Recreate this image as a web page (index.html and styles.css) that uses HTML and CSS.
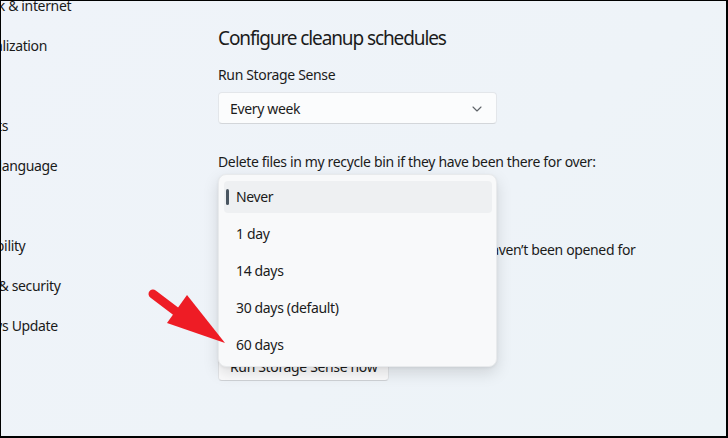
FILE: index.html
```html
<!DOCTYPE html>
<html lang="en">
<head>
<meta charset="utf-8">
<title>Storage Sense</title>
<link rel="stylesheet" href="styles.css">
</head>
<body>
<div class="frame">
  <nav class="sidebar">
    <ul class="nav-list">
      <li>Network &amp; internet</li>
      <li>Personalization</li>
      <li>Apps</li>
      <li>Accounts</li>
      <li>Time &amp; language</li>
      <li>Gaming</li>
      <li>Accessibility</li>
      <li>Privacy &amp; security</li>
      <li>Windows Update</li>
    </ul>
  </nav>
  <main class="main">
    <h2 class="heading">Configure cleanup schedules</h2>
    <div class="label">Run Storage Sense</div>
    <div class="select">
      <span>Every week</span>
      <svg class="chev" width="10" height="6" viewBox="0 0 10 6"><path d="M1 1 L5 5 L9 1" fill="none" stroke="#5f6368" stroke-width="1.1" stroke-linecap="round" stroke-linejoin="round"/></svg>
    </div>
    <div class="label label-gap">Delete files in my recycle bin if they have been there for over:</div>
    <div class="select select-hidden"><span>Never</span></div>
    <div class="label label-wrap">Delete files in my Downloads folder if they haven’t been opened for more than:</div>
    <div class="select select-hidden"><span>Never</span></div>
    <button class="btn">Run Storage Sense now</button>

    <div class="flyout">
      <div class="opt selected"><span class="accent"></span>Never</div>
      <div class="opt">1 day</div>
      <div class="opt">14 days</div>
      <div class="opt">30 days (default)</div>
      <div class="opt">60 days</div>
    </div>
  </main>
  <svg class="arrow" width="100" height="70" viewBox="0 0 100 70">
    <line x1="9" y1="10" x2="38" y2="32" stroke="#ee1c25" stroke-width="9" stroke-linecap="round"/>
    <polygon points="23,39 43,11 81,59" fill="#ee1c25"/>
  </svg>
</div>
</body>
</html>
```
FILE: styles.css
```css
* { box-sizing: border-box; }
html, body { margin: 0; padding: 0; }
body {
  width: 728px;
  height: 438px;
  overflow: hidden;
  font-family: "Noto Sans", "Open Sans", sans-serif;
  letter-spacing: -0.35px;
  color: #1b1b1b;
}
.frame {
  position: relative;
  width: 728px;
  height: 438px;
  border-style: solid;
  border-color: #000;
  border-width: 1px 2px 2px 1px;
  background: linear-gradient(135deg, #eff3f9 0%, #eef3f8 60%, #ecf3f7 100%);
  display: flex;
  overflow: hidden;
}
.sidebar {
  width: 217px;
  flex: none;
  overflow: hidden;
}
.nav-list {
  list-style: none;
  margin: -15px 0 0 -50px;
  padding: 0;
}
.nav-list li {
  height: 40px;
  line-height: 40px;
  font-size: 14px;
  white-space: nowrap;
  color: #1a1a1a;
}
.main {
  position: relative;
  flex: 1;
  padding-top: 23px;
  display: flex;
  flex-direction: column;
  align-items: flex-start;
}
.heading {
  margin: 0;
  font-size: 19px;
  line-height: 28px;
  font-weight: 400;
  letter-spacing: -1.1px;
}
.label {
  margin-top: 13px;
  font-size: 14px;
  line-height: 20px;
  white-space: nowrap;
}
.label-gap { margin-top: 28px; }
.label-wrap {
  white-space: normal;
  width: 440px;
  margin-top: 28px;
}
.select {
  margin-top: 7px;
  width: 279px;
  height: 32px;
  background: #fbfcfd;
  border: 1px solid #e3e6ea;
  border-bottom-color: #d3d6da;
  border-radius: 4px;
  display: flex;
  align-items: center;
  justify-content: space-between;
  padding: 0 14px 0 11px;
  font-size: 14px;
}
.select-hidden { margin-top: 8px; }
.chev { margin-top: 1px; }
.btn {
  margin-top: 31px;
  height: 30px;
  padding: 0 11px;
  font-family: inherit;
  letter-spacing: inherit;
  font-size: 14px;
  color: #1b1b1b;
  background: #fbfbfc;
  border: 1px solid #e2e4e7;
  border-bottom-color: #cfd2d6;
  border-radius: 4px;
}
.flyout {
  position: absolute;
  left: 0;
  top: 173px;
  width: 279px;
  height: 193px;
  background: #f8f9fa;
  border: 1px solid #e8eaec;
  border-radius: 8px;
  box-shadow: 0 6px 16px rgba(0, 0, 0, 0.13), 0 1px 3px rgba(0, 0, 0, 0.06);
  padding: 6px 4px 6px 5px;
  display: flex;
  flex-direction: column;
  gap: 5px;
}
.opt {
  position: relative;
  height: 32px;
  line-height: 32px;
  padding-left: 12px;
  font-size: 14px;
  border-radius: 4px;
  color: #1b1b1b;
}
.opt.selected { background: #eef0f2; }
.accent {
  position: absolute;
  left: 2px;
  top: 8px;
  width: 3px;
  height: 16px;
  border-radius: 2px;
  background: #4a5661;
}
.arrow {
  position: absolute;
  left: 143px;
  top: 283px;
}
```
